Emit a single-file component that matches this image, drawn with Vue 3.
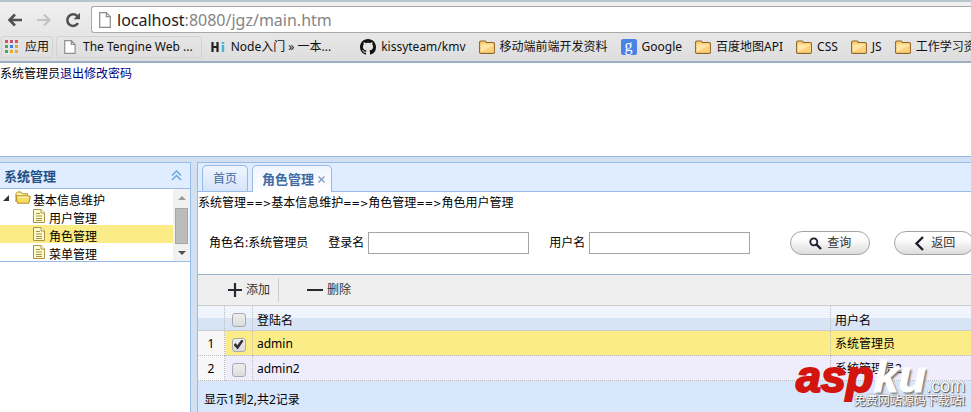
<script setup>
import { ref } from 'vue'

const url = ref('/jgz/main.htm')
const appDots = ['#d9534a', '#c94f7c', '#d9534a', '#4aa657', '#3f7fd9', '#e0a92e', '#4aa657', '#e0a92e', '#e0a92e']

const bookmarks = [
  { icon: 'page', label: 'The Tengine Web ...', boxed: true },
  { icon: 'hi', label: 'Node入门 » 一本...' },
  { icon: 'github', label: 'kissyteam/kmv' },
  { icon: 'folder', label: '移动端前端开发资料' },
  { icon: 'google', label: 'Google' },
  { icon: 'folder', label: '百度地图API' },
  { icon: 'folder', label: 'CSS' },
  { icon: 'folder', label: 'JS' },
  { icon: 'folder', label: '工作学习资料' },
]

const menu = [
  { label: '用户管理' },
  { label: '角色管理', active: true },
  { label: '菜单管理' },
]

const rows = ref([
  { login: 'admin', name: '系统管理员', checked: true },
  { login: 'admin2', name: '系统管理员2', checked: false },
])
const all = ref(false)
const loginName = ref('')
const userName = ref('')
</script>

<template>
  <div class="window">
    <header class="chrome">
      <div class="nav">
        <button class="nav-btn" aria-label="后退">
          <svg width="16" height="16" viewBox="0 0 16 16"><path d="M8 2.5 2.5 8 8 13.5M3 8h12" fill="none" stroke="#505050" stroke-width="2.6" /></svg>
        </button>
        <button class="nav-btn" aria-label="前进">
          <svg width="16" height="16" viewBox="0 0 16 16"><path d="M8 2.5 13.5 8 8 13.5M13 8H1" fill="none" stroke="#c3c3c3" stroke-width="2.2" /></svg>
        </button>
        <button class="nav-btn" aria-label="刷新">
          <svg width="16" height="16" viewBox="0 0 16 16"><path d="M13 11.2A5.8 5.8 0 1 1 12.2 4" fill="none" stroke="#505050" stroke-width="2.5" /><path d="M15 .8v6.4H8.6z" fill="#505050" /></svg>
        </button>
        <div class="omnibox">
          <svg width="12" height="16" viewBox="0 0 12 16"><path d="M.7.7h6.6l4 4v10.6H.7zM7.3.7v4h4" fill="#fff" stroke="#8b8b8b" stroke-width="1.2" /></svg>
          <span class="url"><b>localhost</b>:8080{{ url }}</span>
        </div>
      </div>
      <nav class="bookmarks">
        <a href="#" class="bookmark boxed apps">
          <span class="dots"><i v-for="(c, i) in appDots" :key="i" :style="{ background: c }"></i></span>应用
        </a>
        <a v-for="(b, i) in bookmarks" :key="i" href="#" class="bookmark" :class="[b.icon, { boxed: b.boxed }]">
          <svg v-if="b.icon === 'page'" width="12" height="14" viewBox="0 0 12 14"><path d="M.7.7h6.6l3.8 3.8v8.8H.7zM7.3.7v3.8h3.8" fill="#fff" stroke="#909090" stroke-width="1.2" /></svg>
          <svg v-else-if="b.icon === 'hi'" width="16" height="14" viewBox="0 0 16 14"><path d="M2.5 2v10M7.5 2v10M2 7h6" stroke="#222" stroke-width="2.2" /><path d="M13 5v7M13 2v2" stroke="#42b7dc" stroke-width="2.4" /></svg>
          <svg v-else-if="b.icon === 'github'" width="16" height="16" viewBox="0 0 16 16"><path fill="#111" d="M8 0C3.58 0 0 3.58 0 8c0 3.54 2.29 6.53 5.47 7.59.4.07.55-.17.55-.38 0-.19-.01-.82-.01-1.49-2.01.37-2.53-.49-2.69-.94-.09-.23-.48-.94-.82-1.13-.28-.15-.68-.52-.01-.53.63-.01 1.08.58 1.23.82.72 1.21 1.87.87 2.33.66.07-.52.28-.87.51-1.07-1.78-.2-3.64-.89-3.64-3.95 0-.87.31-1.59.82-2.15-.08-.2-.36-1.02.08-2.12 0 0 .67-.21 2.2.82.64-.18 1.32-.27 2-.27s1.36.09 2 .27c1.53-1.04 2.2-.82 2.2-.82.44 1.1.16 1.92.08 2.12.51.56.82 1.27.82 2.15 0 3.07-1.87 3.75-3.65 3.95.29.25.54.73.54 1.48 0 1.07-.01 1.93-.01 2.2 0 .21.15.46.55.38A8.01 8.01 0 0 0 16 8c0-4.42-3.58-8-8-8z" /></svg>
          <span v-else-if="b.icon === 'google'" class="g">g</span>
          <svg v-else width="16" height="14" viewBox="0 0 16 14"><path d="M.6 12.2V2.600Q.6 1 2 1h4q1 0 1.300 1.500h6.900q1.200 0 1.200 1.200v8.500q0 1.200-1.200 1.200H1.800q-1.200 0-1.200-1.200z" fill="#fbd06f" stroke="#8f6330" stroke-width="1.100" /><path d="M1.600 4.300h12.800v7.800H1.600z" fill="#ffe6a8" /><path d="M1.600 12.300 14.400 5v7.300z" fill="#fdd07a" /></svg>
          {{ b.label }}
        </a>
      </nav>
    </header>

    <div class="banner">系统管理员<a href="#">退出</a><a href="#">修改密码</a></div>

    <div class="body">
      <aside class="side">
        <h2>
          系统管理
          <button aria-label="收起"><svg width="11" height="11" viewBox="0 0 11 11"><path d="M1 5.500 5.500 1 10 5.500M1 10l4.500-4.500L10 10" fill="none" stroke="#6aa7dc" stroke-width="1.500" /></svg></button>
        </h2>
        <div class="tree-wrap">
          <ul class="tree">
            <li class="root">
              <svg class="tri" width="6" height="6" viewBox="0 0 6 6"><path d="M6 0v6H0z" fill="#333" /></svg>
              <svg width="16" height="14" viewBox="0 0 16 14"><path d="M1 11V2.500L2.500 1H6l1.500 1.800h5.200V5" fill="#fff3a8" stroke="#b78c24" /><path d="M1 4.800h11.500l2.800.7-1.500 6.700H2.500z" fill="#f7dc63" stroke="#b78c24" /><path d="M3 6.200h10.500" stroke="#fffbd0" /></svg>
              <span>基本信息维护</span>
            </li>
            <li v-for="m in menu" :key="m.label" :class="{ active: m.active }">
              <svg width="12" height="14" viewBox="0 0 12 14"><path d="M.5.5h7.500l3.500 3.500v9.500H.5z" fill="#fffbd0" stroke="#a99445" /><path d="M8 .5V4h3.500" fill="#fff" stroke="#a99445" /><path d="M3 4.500h4M3 7h6M3 9.500h6M3 11.500h6" stroke="#aa9140" /></svg>
              <span>{{ m.label }}</span>
            </li>
          </ul>
          <div class="scroll">
            <svg width="8" height="4" viewBox="0 0 8 4"><path d="M0 4l4-4 4 4z" fill="#9b9b9b" /></svg>
            <span class="thumb"></span>
            <svg width="8" height="4" viewBox="0 0 8 4"><path d="M0 0l4 4 4-4z" fill="#505050" /></svg>
          </div>
        </div>
      </aside>

      <main class="main">
        <div class="tabs">
          <button class="tab">首页</button>
          <button class="tab on">角色管理
            <svg width="7" height="7" viewBox="0 0 7 7"><path d="M.5.5l6 6M6.500.5l-6 6" stroke="#7f9bbb" stroke-width="1.300" /></svg>
          </button>
        </div>
        <p class="crumb">系统管理<i>==&gt;</i>基本信息维护<i>==&gt;</i>角色管理<i>==&gt;</i>角色用户管理</p>
        <form class="search" @submit.prevent>
          <span class="role">角色名:系统管理员</span>
          <label class="field">登录名<input v-model="loginName" type="text" /></label>
          <label class="field">用户名<input v-model="userName" type="text" /></label>
          <div class="actions">
            <button class="pill" type="submit">
              <svg width="13" height="13" viewBox="0 0 13 13"><circle cx="4.800" cy="4.800" r="3.500" fill="none" stroke="#1d1d2b" stroke-width="1.800" /><path d="M7.500 7.500l4.500 4.500" stroke="#1d1d2b" stroke-width="2.400" /></svg>查询
            </button>
            <button class="pill" type="button">
              <svg width="13" height="15" viewBox="0 0 13 15"><path d="M10 1 3.500 7.500 10 14" fill="none" stroke="#1d1d2b" stroke-width="2.400" /></svg>返回
            </button>
          </div>
        </form>
        <div class="toolbar">
          <button><svg width="14" height="14" viewBox="0 0 14 14"><path d="M7 0v14M0 7h14" stroke="#2a2730" stroke-width="2.200" /></svg>添加</button>
          <button><svg width="16" height="14" viewBox="0 0 16 14"><path d="M0 7h16" stroke="#2a2730" stroke-width="2" /></svg>删除</button>
        </div>
        <table>
          <colgroup><col class="c-num" /><col class="c-chk" /><col class="c-login" /><col /></colgroup>
          <thead>
            <tr>
              <th></th>
              <th><input v-model="all" type="checkbox" aria-label="全选" /></th>
              <th>登陆名</th>
              <th>用户名</th>
            </tr>
          </thead>
          <tbody>
            <tr v-for="(r, i) in rows" :key="r.login" :class="{ selected: r.checked }">
              <td>{{ i + 1 }}</td>
              <td><input v-model="r.checked" type="checkbox" :aria-label="r.login" /></td>
              <td>{{ r.login }}</td>
              <td>{{ r.name }}</td>
            </tr>
          </tbody>
        </table>
        <footer>显示1到2,共2记录</footer>
      </main>
    </div>

    <div class="watermark">
      <div class="logo"><span class="red">asp</span><span class="white">ku</span><span class="com">.com</span></div>
      <div class="slogan">免费网站源码下载站!</div>
    </div>
  </div>
</template>

<style>
body {
  overflow: hidden;
}
</style>

<style scoped>
* {
  box-sizing: border-box;
}
.window {
  position: relative;
  display: flex;
  flex-direction: column;
  min-height: 100vh;
  overflow: hidden;
  background: #fff;
  color: #000;
  font: 12px/16px 'Noto Sans', 'Noto Sans CJK SC', sans-serif;
}
button {
  margin: 0;
  padding: 0;
  border: 0;
  background: none;
  color: inherit;
  font: inherit;
}
svg {
  flex: none;
  display: block;
}
a {
  text-decoration: none;
}
.chrome {
  border-top: 2px solid #b5c7cd;
  border-bottom: 2px solid #9eb0bf;
  background: linear-gradient(#f0f0f0, #dedede);
  overflow: hidden;
}
.nav {
  display: flex;
  align-items: center;
  gap: 13px;
  padding: 4px 0 0 7px;
}
.omnibox {
  flex: 1;
  display: flex;
  align-items: center;
  gap: 6px;
  height: 27px;
  margin-left: -3px;
  padding-left: 7px;
  border: 1px solid #a9a9a9;
  border-right: 0;
  border-radius: 3px 0 0 3px;
  background: #fff;
}
.url {
  color: #858585;
  font-size: 16px;
  line-height: 24px;
}
.url b {
  color: #222;
  font-weight: 400;
}
.bookmarks {
  display: flex;
  padding: 3px 0 3px 1px;
  gap: 3px;
}
.bookmark {
  flex: none;
  display: flex;
  align-items: center;
  gap: 5px;
  height: 22px;
  padding: 0 4px;
  border: 1px solid transparent;
  color: #111;
  white-space: nowrap;
}
.boxed {
  border-color: #d2d2d2;
  border-radius: 3px;
}
.apps {
  gap: 6px;
  padding: 0 3px;
}
.page {
  gap: 7px;
  padding: 0 8px 0 7px;
}
.hi {
  padding-right: 20px;
}
.dots {
  display: grid;
  grid-template-columns: repeat(3, 4px);
  gap: 1px;
}
.dots i {
  height: 4px;
  border: solid #e6e6e6;
  border-width: 0 1px 1px 0;
}
.g {
  width: 16px;
  height: 16px;
  border-radius: 2px;
  background: #4a83e6;
  color: #fff;
  font: 16px/13px 'Liberation Serif', serif;
  text-align: center;
}
.banner {
  height: 93px;
  padding-top: 3px;
}
.banner a {
  color: #00007f;
}
.body {
  flex: 1;
  display: flex;
  gap: 6px;
  padding-top: 5px;
  border-top: 1px solid #95b8e7;
  background: #d2e0f2;
}
.side {
  flex: none;
  width: 191px;
  border-top: 1px solid #99bbe8;
  border-right: 1px solid #99bbe8;
  background: #fff;
}
.side h2 {
  display: flex;
  align-items: center;
  justify-content: space-between;
  height: 26px;
  margin: 0;
  padding: 0 8px 0 4px;
  border-bottom: 1px solid #99bbe8;
  background: #e0ecff;
  color: #1f5087;
  font-size: 13px;
  font-weight: 700;
}
.tree-wrap {
  display: flex;
  height: 73px;
  border-bottom: 1px solid #99bbe8;
  overflow: hidden;
}
.tree {
  flex: 1;
  margin: 0;
  padding: 0;
  list-style: none;
}
.tree li {
  display: flex;
  align-items: center;
  gap: 4px;
  height: 18px;
  padding-left: 33px;
}
.tree li span {
  padding-top: 6px;
}
.tree .root {
  gap: 2px;
  padding-left: 3px;
}
.tri {
  margin-right: 4px;
}
.tree .active {
  background: #fbec88;
}
.scroll {
  display: flex;
  flex-direction: column;
  align-items: center;
  justify-content: space-between;
  width: 17px;
  padding: 7px 2px 6px;
  background: #f1f1f1;
}
.thumb {
  width: 13px;
  height: 36px;
  border: 1px solid #a8a8a8;
  background: #bcbcbc;
}
.main {
  flex: 1;
  display: flex;
  flex-direction: column;
  min-width: 0;
  border: 1px solid #99bbe8;
  border-width: 1px 0 0 1px;
  background: #fff;
}
.tabs {
  display: flex;
  align-items: flex-end;
  gap: 4px;
  height: 29px;
  padding-left: 4px;
  border-bottom: 1px solid #99bbe8;
  background: #e0ecff;
}
.tab {
  display: flex;
  align-items: center;
  gap: 4px;
  height: 26px;
  padding: 0 10px;
  border: 1px solid #95b8e7;
  border-bottom: 0;
  border-radius: 5px 5px 0 0;
  background: linear-gradient(#eff5ff, #d5e4fb);
  color: #416aa3;
}
.tab.on {
  height: 27px;
  margin-bottom: -1px;
  padding: 0 6px 0 9px;
  background: linear-gradient(#eff5ff, #fff);
  font-size: 13px;
  font-weight: 700;
}
.crumb {
  margin: 0;
  padding: 3px 0 1px;
}
.crumb i {
  font: 10px/12px 'DejaVu Sans', sans-serif;
}
.search {
  display: flex;
  align-items: center;
  gap: 20px;
  height: 62px;
  padding: 0 0 0 11px;
  overflow: hidden;
  white-space: nowrap;
}
.role,
.field,
.actions {
  flex: none;
}
.field {
  display: flex;
  align-items: center;
  gap: 4px;
}
.field input {
  width: 161px;
  height: 22px;
  border: 1px solid #a5a5a5;
  background: #fff;
  font: inherit;
}
.actions {
  display: flex;
  gap: 24px;
  margin-left: 20px;
}
.pill {
  display: flex;
  align-items: center;
  justify-content: center;
  gap: 5px;
  width: 80px;
  height: 24px;
  border: 1px solid #a3a3a3;
  border-radius: 12px;
  background: linear-gradient(#fff 30%, #dcdcdc);
  color: #333;
}
.toolbar {
  display: flex;
  align-items: center;
  height: 32px;
  padding-left: 30px;
  border-top: 1px solid #99b3cc;
  border-bottom: 1px solid #ccc;
  background: #efefef;
  color: #333;
}
.toolbar button {
  display: flex;
  align-items: center;
  gap: 4px;
  height: 24px;
}
.toolbar button + button {
  margin-left: 8px;
  padding-left: 28px;
  border-left: 1px solid #ccc;
}
table {
  width: 100%;
  table-layout: fixed;
  border-collapse: separate;
  border-spacing: 0;
}
.c-num {
  width: 27px;
}
.c-chk {
  width: 28px;
}
.c-login {
  width: 578px;
}
th,
td {
  height: 25px;
  padding: 2px 4px 0;
  border-right: 1px dotted #bbb;
  border-bottom: 1px dotted #bbb;
  font-weight: 400;
  text-align: left;
  line-height: 16px;
}
th {
  padding-top: 5px;
  border-bottom: 1px solid #ccc;
  background: linear-gradient(#f0f5fd 50%, #d6e4f5 50%);
}
tbody tr {
  background: #efedfb;
}
tbody .selected {
  background: #fbec88;
}
td:first-child {
  padding: 2px 0 0;
  background: #f7f7f7;
  text-align: center;
}
th:nth-child(2),
td:nth-child(2) {
  padding: 3px 0 0;
  text-align: center;
}
th:last-child,
td:last-child {
  border-right: 0;
}
input[type='checkbox'] {
  appearance: none;
  display: block;
  width: 14px;
  height: 14px;
  margin: 0 auto;
  border: 1px solid #aaa;
  border-radius: 3px;
  background: linear-gradient(#eee, #dcdcdc);
}
input[type='checkbox']:checked::before {
  content: '';
  display: block;
  width: 10px;
  height: 10px;
  margin: 1px;
  background: #333;
  clip-path: polygon(0 55%, 20% 35%, 38% 58%, 80% 0, 100% 15%, 42% 100%);
}
footer {
  flex: 1;
  padding: 11px 6px 3px;
  background: #d9e7fc;
}
.watermark {
  position: absolute;
  right: 6px;
  bottom: 2px;
  text-align: right;
  white-space: nowrap;
}
.logo {
  font: italic 700 45px/48px 'Liberation Sans', sans-serif;
}
.red {
  color: #d3150f;
  -webkit-text-stroke: 2px #d3150f;
}
.white {
  color: #fff;
  -webkit-text-stroke: 1px #fff;
  text-shadow: 2px 2px 2px #777;
}
.com {
  color: #fff;
  font-size: 18px;
  font-style: normal;
  font-weight: 400;
  text-shadow: 1px 1px 1px #555, 0 0 1px #555;
}
.slogan {
  position: absolute;
  right: 0;
  bottom: 2px;
  color: #fff;
  font-size: 12px;
  line-height: 15px;
  text-shadow: 1px 1px 1px #444, 0 0 2px #666;
}
</style>
